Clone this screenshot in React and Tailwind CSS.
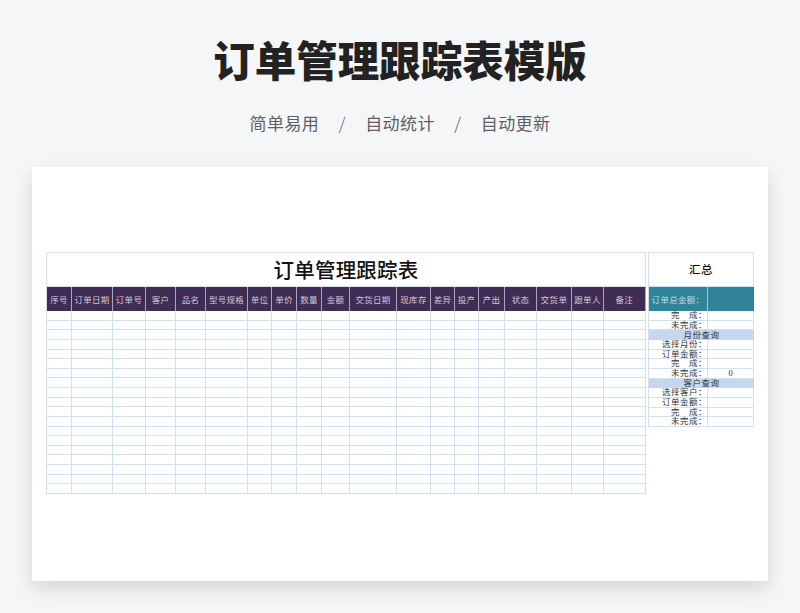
const cols = ["序号","订单日期","订单号","客户","品名","型号规格","单位","单价","数量","金额","交货日期","现库存","差异","投产","产出","状态","交货单","跟单人","备注"];
const rows = Array.from({ length: 19 }, (_, i) => i);

const side = [
  { t: "完　成：", r: "" },
  { t: "未完成：", r: "" },
  { band: "月份查询" },
  { t: "选择月份：", r: "" },
  { t: "订单金额：", r: "" },
  { t: "完　成：", r: "" },
  { t: "未完成：", r: "0" },
  { band: "客户查询" },
  { t: "选择客户：", r: "" },
  { t: "订单金额：", r: "" },
  { t: "完　成：", r: "" },
  { t: "未完成：", r: "" },
];

export default function App() {
  return (
    <div className="w-[800px] h-[613px] overflow-hidden bg-[#f5f6f8] font-['Noto_Sans_CJK_SC',sans-serif] flex flex-col items-center">
      <h1 className="mt-[30px] h-[58px] text-[41.5px] leading-[58px] font-black text-[#222222]">订单管理跟踪表模版</h1>
      <div className="mt-[20px] h-[30px] flex items-center text-[17px] leading-[30px] text-[#5f5f5f] tracking-[0.4px]">
        <span>简单易用</span>
        <span className="mx-[18px] w-[10px] text-center font-light">/</span>
        <span>自动统计</span>
        <span className="mx-[18px] w-[10px] text-center font-light">/</span>
        <span>自动更新</span>
      </div>
      <div className="mt-[29px] w-[736px] h-[414px] bg-white shadow-[0_8px_18px_rgba(0,0,0,0.13)] pt-[85px] pl-[14px] flex items-start gap-[2px]">
        <div className="w-[600px] border-l border-t border-[#cfe0ee]">
          <div className="h-[34px] flex items-center justify-center border-r border-b border-[#cfe0ee] text-[20.5px] text-[#111111] font-medium tracking-[0.2px]">订单管理跟踪表</div>
          <div className="grid grid-cols-[25px_41px_33px_30px_30px_42px_24px_25px_25px_28px_47px_34px_24px_24px_26px_32px_35px_32px_41.5px] auto-rows-[24px]">
            {cols.map((c) => (
              <div key={c} className="flex items-center justify-center bg-[#3f2d56] border-r border-[#a9a6c0] text-[#cfc9d8] text-[8.5px] tracking-[0.3px] whitespace-nowrap">{c}</div>
            ))}
          </div>
          <div className="grid grid-cols-[25px_41px_33px_30px_30px_42px_24px_25px_25px_28px_47px_34px_24px_24px_26px_32px_35px_32px_41.5px] auto-rows-[9.63px]">
            {rows.flatMap((r) => cols.map((c) => (
              <div key={r + c} className="border-r border-b border-[#cfe0ee]" />
            )))}
          </div>
        </div>
        <div className="w-[106px] border-l border-t border-[#cfe0ee]">
          <div className="h-[34px] flex items-center justify-center border-r border-b border-[#cfe0ee] text-[11.5px] font-medium text-[#111111] tracking-[0.5px]">汇总</div>
          <div className="grid grid-cols-[59px_46px] h-[24px] bg-[#2f8499] text-[#bfdbe2] text-[8.5px] tracking-[0.3px]">
            <div className="flex items-center justify-center border-r border-[#a9c7d2] whitespace-nowrap">订单总金额：</div>
            <div />
          </div>
          <div className="font-['Liberation_Serif','Noto_Sans_CJK_SC',serif]">
            {side.map((s, i) =>
              s.band ? (
                <div key={i} className="h-[9.67px] bg-[#c5d8f0] flex items-center justify-center text-[8.5px] leading-none text-[#333333] tracking-[0.5px]">{s.band}</div>
              ) : (
                <div key={i} className="grid grid-cols-[59px_46px] h-[9.67px] border-b border-[#cfe0ee] text-[8.5px] leading-none text-[#333333]">
                  <div className="flex items-center justify-end border-r border-[#cfe0ee] tracking-[0.5px] whitespace-nowrap">{s.t}</div>
                  <div className="flex items-center justify-center border-r border-[#cfe0ee]">{s.r}</div>
                </div>
              )
            )}
          </div>
        </div>
      </div>
    </div>
  );
}
